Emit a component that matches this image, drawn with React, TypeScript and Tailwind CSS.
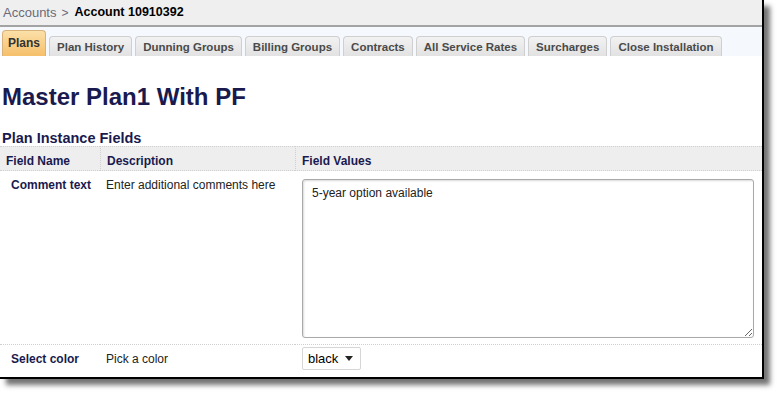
const tabs = ['Plan History', 'Dunning Groups', 'Billing Groups', 'Contracts', 'All Service Rates', 'Surcharges', 'Close Installation']

export default function App() {
  return (
    <div className="w-[778px] h-[393px] bg-white font-['Liberation_Sans',Arial,sans-serif]">
      <div className="w-[764px] h-[379px] border-r-2 border-b-2 border-black bg-white shadow-[6px_6px_5px_rgba(0,0,0,0.55)] flex flex-col overflow-hidden">
        {/* breadcrumb */}
        <div className="h-[27px] shrink-0 bg-[#efefef] border-b-2 border-[#a3a3a3] flex items-center pl-[3px]">
          <span className="text-[13px] text-[#6a6a7a]">Accounts</span>
          <span className="ml-[5px] text-[12px] text-[#6a6a7a]">&gt;</span>
          <span className="ml-[6px] text-[12.5px] font-bold text-black">Account 10910392</span>
        </div>

        {/* tabs */}
        <div className="h-[29px] shrink-0 bg-[#f5f9fd] flex items-end pl-[2px] gap-[3px]">
          <div className="h-[26px] px-[5px] pt-[3px] rounded-t-[4px] border border-b-0 border-[#d9b27a] bg-gradient-to-b from-[#fbe0a8] to-[#f5bf6a] text-[12px] font-bold text-[#333]">
            Plans
          </div>
          {tabs.map((t) => (
            <div
              key={t}
              className="h-[20px] px-[7px] pt-[2px] rounded-t-[4px] border border-b-0 border-[#cfcfcf] bg-gradient-to-b from-[#f2f2f2] to-[#e2e2e2] text-[11.5px] font-bold text-[#4a4a4a]"
            >
              {t}
            </div>
          ))}
        </div>

        {/* content */}
        <div className="flex-1 bg-white text-[#1a1a4e]">
          <h1 className="pl-[2px] pt-[28px] text-[24px] font-bold leading-[26px]">Master Plan1 With PF</h1>
          <h2 className="pl-[2px] mt-[20px] text-[14.5px] font-bold leading-[16px]">Plan Instance Fields</h2>

          <div className="grid grid-cols-[100px_195px_1fr]">
            <div className="h-[25px] bg-[#eeeeee] border-t border-b border-dotted border-[#cfcfcf] pl-[6px] pt-[5px] text-[12px] font-bold">Field Name</div>
            <div className="h-[25px] bg-[#eeeeee] border-t border-b border-l border-dotted border-[#cfcfcf] pl-[6px] pt-[5px] text-[12px] font-bold">Description</div>
            <div className="h-[25px] bg-[#eeeeee] border-t border-b border-l border-dotted border-[#cfcfcf] pl-[6px] pt-[5px] text-[12px] font-bold">Field Values</div>

            <div className="h-[174px] border-b border-dotted border-[#cfcfcf] pl-[11px] pt-[5px] text-[12px] font-bold">Comment text</div>
            <div className="h-[174px] border-b border-dotted border-[#cfcfcf] pl-[6px] pt-[5px] text-[12px] text-[#222]">Enter additional comments here</div>
            <div className="h-[174px] border-b border-dotted border-[#cfcfcf] pl-[7px] pt-[8px]">
              <textarea
                readOnly
                defaultValue="5-year option available"
                className="w-[452px] h-[159px] block resize-y rounded-[3px] border border-[#a9a9a9] shadow-[inset_1px_1px_2px_rgba(0,0,0,0.15)] px-[9px] pt-[4px] text-[12px] text-[#222] font-['Liberation_Sans',Arial,sans-serif] outline-none"
              />
            </div>

            <div className="pl-[11px] pt-[5px] text-[12px] font-bold">Select color</div>
            <div className="pl-[6px] pt-[5px] text-[12px] text-[#222]">Pick a color</div>
            <div className="pl-[7px] pt-[2px]">
              <div className="w-[59px] h-[23px] border border-[#d6d6d6] rounded-[2px] bg-white flex items-center justify-between pl-[5px] pr-[7px] text-[13px] text-black">
                <span>black</span>
                <svg width="8" height="5" viewBox="0 0 8 5">
                  <path d="M0 0h8L4 5z" fill="#222" />
                </svg>
              </div>
            </div>
          </div>
        </div>
      </div>
    </div>
  )
}
